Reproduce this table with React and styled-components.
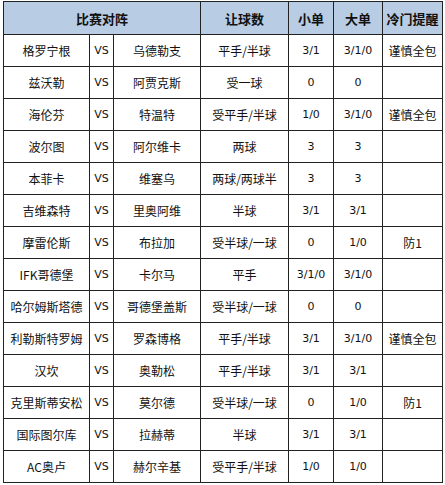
import React from 'react';
import styled, { createGlobalStyle } from 'styled-components';

const GlobalStyle = createGlobalStyle`
  html, body {
    margin: 0;
    padding: 0;
    background: #ffffff;
  }
  body {
    font-family: "Noto Sans CJK SC", "Liberation Sans", sans-serif;
  }
`;

const Wrapper = styled.div`
  padding: 1px 0 0 3px;
`;

const Table = styled.table`
  border-collapse: collapse;
  table-layout: fixed;
  width: 440px;
  color: #111;
`;

const HeadCell = styled.th`
  height: 32px;
  padding: 0;
  background: #b8cce4;
  border: 1px solid #222;
  font-size: 13px;
  font-weight: 700;
  text-align: center;
  vertical-align: middle;
  line-height: 1;
`;

const Cell = styled.td`
  height: 31px;
  padding: 0;
  border: 1px solid #222;
  font-size: ${p => (p.$small ? '11px' : '12px')};
  font-family: ${p => (p.$num ? '"DejaVu Sans", "Liberation Sans", sans-serif' : 'inherit')};
  text-align: center;
  vertical-align: middle;
  white-space: nowrap;
  line-height: 1;
`;

const widths = [86, 24, 87, 88, 45, 49, 60];

const rows = [
  ['格罗宁根', '乌德勒支', '平手/半球', '3/1', '3/1/0', '谨慎全包'],
  ['兹沃勒', '阿贾克斯', '受一球', '0', '0', ''],
  ['海伦芬', '特温特', '受平手/半球', '1/0', '3/1/0', '谨慎全包'],
  ['波尔图', '阿尔维卡', '两球', '3', '3', ''],
  ['本菲卡', '维塞乌', '两球/两球半', '3', '3', ''],
  ['吉维森特', '里奥阿维', '半球', '3/1', '3/1', ''],
  ['摩雷伦斯', '布拉加', '受半球/一球', '0', '1/0', '防1'],
  ['IFK哥德堡', '卡尔马', '平手', '3/1/0', '3/1/0', ''],
  ['哈尔姆斯塔德', '哥德堡盖斯', '受半球/一球', '0', '0', ''],
  ['利勒斯特罗姆', '罗森博格', '平手/半球', '3/1', '3/1/0', '谨慎全包'],
  ['汉坎', '奥勒松', '平手/半球', '3/1', '3/1', ''],
  ['克里斯蒂安松', '莫尔德', '受半球/一球', '0', '1/0', '防1'],
  ['国际图尔库', '拉赫蒂', '半球', '3/1', '3/1', ''],
  ['AC奥卢', '赫尔辛基', '受平手/半球', '1/0', '1/0', ''],
];

export default function App() {
  return (
    <>
      <GlobalStyle />
      <Wrapper>
        <Table>
          <colgroup>
            {widths.map((w, i) => (
              <col key={i} style={{ width: w }} />
            ))}
          </colgroup>
          <thead>
            <tr>
              <HeadCell colSpan={3}>比赛对阵</HeadCell>
              <HeadCell>让球数</HeadCell>
              <HeadCell>小单</HeadCell>
              <HeadCell>大单</HeadCell>
              <HeadCell>冷门提醒</HeadCell>
            </tr>
          </thead>
          <tbody>
            {rows.map(([home, away, hcp, small, big, tip]) => (
              <tr key={home}>
                <Cell>{home}</Cell>
                <Cell $small $num>VS</Cell>
                <Cell>{away}</Cell>
                <Cell>{hcp}</Cell>
                <Cell $num $small>{small}</Cell>
                <Cell $num $small>{big}</Cell>
                <Cell>{tip}</Cell>
              </tr>
            ))}
          </tbody>
        </Table>
      </Wrapper>
    </>
  );
}
